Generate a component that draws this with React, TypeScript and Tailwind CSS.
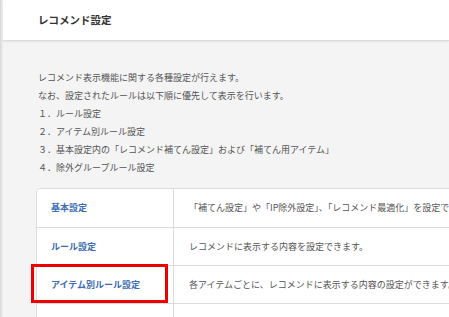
import React from 'react';

const rows = [
  { label: '基本設定', text: '「補てん設定」や「IP除外設定」、「レコメンド最適化」を設定できます。' },
  { label: 'ルール設定', text: 'レコメンドに表示する内容を設定できます。' },
  { label: 'アイテム別ルール設定', text: '各アイテムごとに、レコメンドに表示する内容の設定ができます。', marked: true },
  { label: '除外グループルール設定', text: 'レコメンドに表示しないアイテムのグループを設定できます。' },
];

const steps = [
  '１．ルール設定',
  '２．アイテム別ルール設定',
  '３．基本設定内の「レコメンド補てん設定」および「補てん用アイテム」',
  '４．除外グループルール設定',
];

export default function App() {
  return (
    <div
      className="flex w-[449px] h-[317px] overflow-hidden bg-[#f4f4f4]"
      style={{ fontFamily: '"Noto Sans CJK JP", "Noto Sans", sans-serif' }}
    >
      <div className="w-[3px] shrink-0 bg-gradient-to-r from-[#d6d6d6] to-[#f2f2f2]" />
      <div className="flex-1 min-w-0 flex flex-col">
        <div className="h-[41px] shrink-0 bg-white border-b border-[#dcdcdc] shadow-[0_1px_2px_rgba(0,0,0,0.06)] flex items-center pl-[35px]">
          <h1 className="text-[10.5px] font-bold text-[#333]">レコメンド設定</h1>
        </div>
        <div className="pl-[35px] pt-[28px] text-[9px] leading-[18px] text-[#555]">
          <p>レコメンド表示機能に関する各種設定が行えます。</p>
          <p>なお、設定されたルールは以下順に優先して表示を行います。</p>
          {steps.map((s) => (
            <p key={s}>{s}</p>
          ))}
        </div>
        <div className="ml-[33px] mt-[11px] w-[620px] bg-white border border-[#dcdcdc] rounded-tl-[4px]">
          {rows.map((r, i) => (
            <div
              key={r.label}
              className={`relative flex ${i === 0 ? 'h-[39px]' : 'h-[38px]'} border-b border-[#dcdcdc]`}
            >
              <div className="w-[137px] shrink-0 border-r border-[#dcdcdc] flex items-center pl-[14px] text-[9px] font-bold text-[#3b6db5]">
                {r.label}
              </div>
              <div className="flex-1 flex items-center pl-[15px] text-[9px] text-[#555] whitespace-nowrap">
                {r.text}
              </div>
              {r.marked && (
                <div className="absolute left-[-6px] top-[-2px] w-[137px] h-[39px] border-[3px] border-[#ee0000]" />
              )}
            </div>
          ))}
        </div>
      </div>
    </div>
  );
}
